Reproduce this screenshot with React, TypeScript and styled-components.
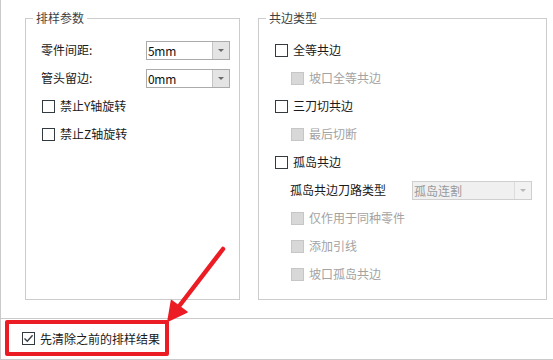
import React from "react";
import styled, { createGlobalStyle, css } from "styled-components";

const Global = createGlobalStyle`
  html, body { margin: 0; padding: 0; background: #ffffff; }
  body {
    font-family: "Noto Sans CJK SC", "Noto Sans", sans-serif;
    font-size: 12px;
    color: #1a1a1a;
  }
  * { box-sizing: border-box; }
`;

const Frame = styled.div`
  position: relative;
  width: 553px;
  height: 360px;
  background: #fff;
  border-left: 1px solid #cacaca;
  display: flex;
  flex-direction: column;
`;

const Main = styled.div`
  height: 318px;
  display: flex;
  align-items: flex-start;
  gap: 18px;
  padding: 11px 0 0 24px;
`;

const Group = styled.fieldset<{ $w: number }>`
  width: ${(p) => p.$w}px;
  height: 289px;
  margin: 0;
  padding: 0;
  border: 1px solid #cccccc;
  min-width: 0;
`;

const Legend = styled.legend`
  margin-left: 7px;
  padding: 0 3px;
  line-height: 14px;
  height: 14px;
  font-size: 12px;
  color: #3f3f3f;
`;

const GroupBody = styled.div<{ $pad: number }>`
  display: flex;
  flex-direction: column;
  padding: 11px 0 0 ${(p) => p.$pad}px;
`;

const Row = styled.div<{ $indent?: number }>`
  height: 28px;
  display: flex;
  align-items: center;
  padding-left: ${(p) => p.$indent ?? 0}px;
`;

const FieldLabel = styled.span<{ $w: number; $disabled?: boolean }>`
  width: ${(p) => p.$w}px;
  flex: none;
  line-height: 14px;
  white-space: nowrap;
  color: ${(p) => (p.$disabled ? "#a3a3a3" : "#1a1a1a")};
`;

const Combo = styled.div<{ $w: number; $disabled?: boolean }>`
  width: ${(p) => p.$w}px;
  height: 19px;
  display: flex;
  border: 1px solid ${(p) => (p.$disabled ? "#cfcfcf" : "#ababab")};
  background: ${(p) => (p.$disabled ? "#f0f0f0" : "#ffffff")};
`;

const ComboText = styled.span<{ $disabled?: boolean }>`
  flex: 1;
  padding-left: 1px;
  line-height: 17px;
  font-size: 12px;
  font-family: "Noto Sans CJK SC", "Noto Sans", sans-serif;
  color: ${(p) => (p.$disabled ? "#9a9a9a" : "#101010")};
  letter-spacing: ${(p) => (p.$disabled ? "0" : "-0.3px")};
`;

const ComboButton = styled.span<{ $disabled?: boolean }>`
  width: 17px;
  flex: none;
  display: flex;
  align-items: center;
  justify-content: center;
  border-left: 1px solid ${(p) => (p.$disabled ? "#dcdcdc" : "#c4c4c4")};
  background: ${(p) => (p.$disabled ? "#f2f2f2" : "#e4e4e4")};
  &::after {
    content: "";
    width: 0;
    height: 0;
    border-left: 3px solid transparent;
    border-right: 3px solid transparent;
    border-top: 3px solid ${(p) => (p.$disabled ? "#b8b8b8" : "#6a6a6a")};
  }
`;

const CheckLabel = styled.label<{ $disabled?: boolean }>`
  display: flex;
  align-items: center;
  gap: 5px;
  line-height: 14px;
  white-space: nowrap;
  color: ${(p) => (p.$disabled ? "#a3a3a3" : "#1a1a1a")};
`;

const Box = styled.span<{ $disabled?: boolean }>`
  width: 13px;
  height: 13px;
  flex: none;
  display: flex;
  align-items: center;
  justify-content: center;
  ${(p) =>
    p.$disabled
      ? css`
          border: 1px solid #c6c6c6;
          background: #d8d8d8;
        `
      : css`
          border: 1px solid #333a40;
          background: #ffffff;
        `}
`;

const Footer = styled.div`
  height: 42px;
  border-top: 1px solid #cacaca;
  border-bottom: 1px solid #cacaca;
  padding: 1px 0 0 4px;
`;

const Highlight = styled.div`
  width: 164px;
  height: 36px;
  border: 4px solid #ec1c24;
  border-radius: 2px;
  display: flex;
  align-items: center;
  padding: 1px 0 0 13px;
`;

const Overlay = styled.svg`
  position: absolute;
  left: -1px;
  top: 0;
  width: 553px;
  height: 360px;
  pointer-events: none;
`;

function Check({
  label,
  disabled,
  checked,
}: {
  label: React.ReactNode;
  disabled?: boolean;
  checked?: boolean;
}) {
  return (
    <CheckLabel $disabled={disabled}>
      <Box $disabled={disabled}>
        {checked && (
          <svg width="11" height="11" viewBox="0 0 11 11">
            <path
              d="M1.5 5.5 L4.3 8.3 L9.6 2.2"
              fill="none"
              stroke="#3a4046"
              strokeWidth="1.4"
            />
          </svg>
        )}
      </Box>
      {label}
    </CheckLabel>
  );
}

export default function App() {
  return (
    <>
      <Global />
      <Frame>
        <Main>
          <Group $w={215}>
            <Legend>排样参数</Legend>
            <GroupBody $pad={15}>
              <Row>
                <FieldLabel $w={105}>零件间距:</FieldLabel>
                <Combo $w={84}>
                  <ComboText>5mm</ComboText>
                  <ComboButton />
                </Combo>
              </Row>
              <Row>
                <FieldLabel $w={105}>管头留边:</FieldLabel>
                <Combo $w={84}>
                  <ComboText>0mm</ComboText>
                  <ComboButton />
                </Combo>
              </Row>
              <Row $indent={1}>
                <Check label="禁止Y轴旋转" />
              </Row>
              <Row $indent={1}>
                <Check label="禁止Z轴旋转" />
              </Row>
            </GroupBody>
          </Group>
          <Group $w={289}>
            <Legend>共边类型</Legend>
            <GroupBody $pad={16}>
              <Row>
                <Check label="全等共边" />
              </Row>
              <Row $indent={16}>
                <Check label="坡口全等共边" disabled />
              </Row>
              <Row>
                <Check label="三刀切共边" />
              </Row>
              <Row $indent={16}>
                <Check label="最后切断" disabled />
              </Row>
              <Row>
                <Check label="孤岛共边" />
              </Row>
              <Row $indent={15}>
                <FieldLabel $w={122}>孤岛共边刀路类型</FieldLabel>
                <Combo $w={120} $disabled>
                  <ComboText $disabled>孤岛连割</ComboText>
                  <ComboButton $disabled />
                </Combo>
              </Row>
              <Row $indent={16}>
                <Check label="仅作用于同种零件" disabled />
              </Row>
              <Row $indent={16}>
                <Check label="添加引线" disabled />
              </Row>
              <Row $indent={16}>
                <Check label="坡口孤岛共边" disabled />
              </Row>
            </GroupBody>
          </Group>
        </Main>
        <Footer>
          <Highlight>
            <Check label="先清除之前的排样结果" checked />
          </Highlight>
        </Footer>
        <Overlay viewBox="0 0 553 360">
          <line
            x1="223"
            y1="249"
            x2="180"
            y2="305"
            stroke="#ec1c24"
            strokeWidth="4.5"
            strokeLinecap="round"
          />
          <polygon
            points="168,321 171.5,300.5 187,312"
            fill="#ec1c24"
            stroke="#ec1c24"
            strokeWidth="1.5"
            strokeLinejoin="round"
          />
        </Overlay>
      </Frame>
    </>
  );
}
